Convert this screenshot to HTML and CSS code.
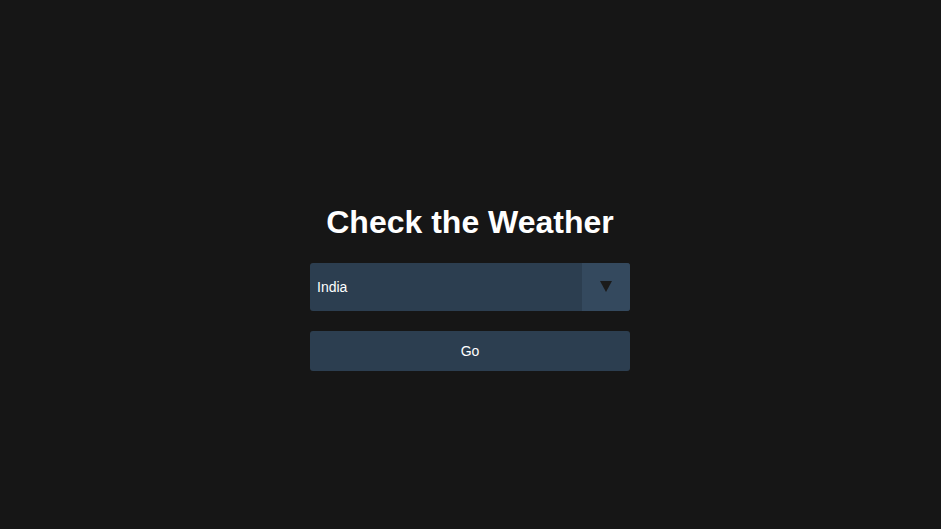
FILE: index.html
```html
<!DOCTYPE html>
<html>
<head>
<meta charset="utf-8">
<link rel="stylesheet" href="styles.css">
</head>
<body>
<main class="app">
  <h1 class="title">Check the Weather</h1>
  <div class="select">
    <span class="select-value">India</span>
    <span class="select-arrow"><svg width="12" height="11" viewBox="0 0 12 11"><polygon points="0,0 12,0 6,11" fill="#1b1b1b"/></svg></span>
  </div>
  <button class="go">Go</button>
</main>
</body>
</html>
```
FILE: styles.css
```css
html, body {
  margin: 0;
  padding: 0;
  background: #161616;
  font-family: "Liberation Sans", Arial, sans-serif;
  color: #fff;
}
.app {
  height: 529px;
  box-sizing: border-box;
  display: flex;
  flex-direction: column;
  align-items: center;
  justify-content: center;
  padding-top: 46px;
  padding-right: 1px;
}
.title {
  margin: 0 0 22px;
  font-size: 32px;
  font-weight: bold;
  line-height: 37px;
}
.select {
  width: 320px;
  height: 48px;
  background: #2c3e50;
  border-radius: 3px;
  display: flex;
  align-items: stretch;
  overflow: hidden;
}
.select-value {
  flex: 1;
  display: flex;
  align-items: center;
  padding-left: 7px;
  font-size: 14px;
  font-weight: 500;
}
.select-arrow {
  width: 48px;
  background: #34495e;
  display: flex;
  align-items: center;
  justify-content: center;
  padding-bottom: 1px;
  box-sizing: border-box;
}
.go {
  margin-top: 20px;
  width: 320px;
  height: 40px;
  border: 0;
  border-radius: 3px;
  background: #2c3e50;
  color: #fff;
  font-family: "Liberation Sans", Arial, sans-serif;
  font-size: 14px;
}
```
